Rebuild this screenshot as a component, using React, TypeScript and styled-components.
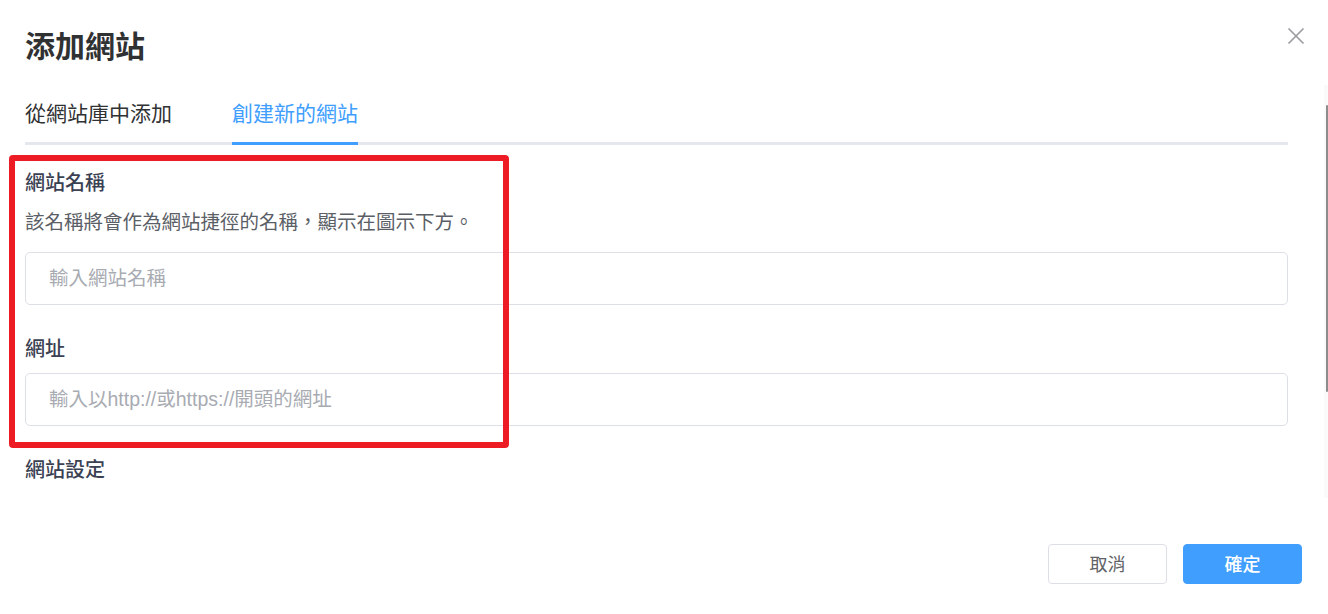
import React from "react";
import styled, { createGlobalStyle } from "styled-components";

const GlobalStyle = createGlobalStyle`
  html, body { margin: 0; padding: 0; background: #ffffff; }
  body { font-family: "Liberation Sans", "Noto Sans CJK TC", sans-serif; }
  * { box-sizing: border-box; }
`;

const Dialog = styled.div`
  width: 1328px;
  height: 614px;
  display: flex;
  flex-direction: column;
  background: #fff;
  overflow: hidden;
`;

const Header = styled.div`
  height: 85px;
  display: flex;
  justify-content: space-between;
  align-items: flex-start;
  padding: 22px 22px 0 25px;
`;

const Title = styled.h1`
  margin: 0;
  font-family: "Noto Sans CJK TC", sans-serif;
  font-size: 30px;
  line-height: 44px;
  font-weight: 700;
  color: #303133;
`;

const CloseButton = styled.button`
  border: none;
  background: transparent;
  padding: 0;
  margin-top: 4px;
  width: 20px;
  height: 20px;
  display: flex;
  align-items: center;
  justify-content: center;
  cursor: pointer;
`;

const BodyRow = styled.div`
  height: 413px;
  display: flex;
`;

const Body = styled.div`
  flex: 1;
  overflow: hidden;
  padding: 0 36px 0 25px;
`;

const ScrollRail = styled.div`
  width: 4px;
  background: #fafafa;
  display: flex;
  flex-direction: column;
  align-items: flex-end;
  padding-top: 20px;
`;

const ScrollThumb = styled.div`
  width: 2px;
  height: 287px;
  background: #8c8c8c;
  border-radius: 1px;
`;

const Tabs = styled.div`
  display: flex;
  gap: 60px;
  height: 60px;
  border-bottom: 3px solid #e4e7ed;
`;

const Tab = styled.div<{ $active?: boolean }>`
  display: flex;
  align-items: center;
  height: 60px;
  margin-bottom: -3px;
  padding-bottom: 3px;
  font-family: "Noto Sans CJK TC", sans-serif;
  font-size: 21px;
  font-weight: 400;
  color: ${(p) => (p.$active ? "#409eff" : "#303133")};
  border-bottom: 3px solid ${(p) => (p.$active ? "#409eff" : "transparent")};
  cursor: pointer;
`;

const Form = styled.div`
  position: relative;
  padding: 23px 0 0;
  display: flex;
  flex-direction: column;
  gap: 29px;
`;

const Field = styled.div`
  display: flex;
  flex-direction: column;
`;

const Label = styled.div`
  font-family: "Noto Sans CJK TC", sans-serif;
  font-size: 20px;
  line-height: 28px;
  font-weight: 500;
  color: #3a4152;
  margin-bottom: 11px;
`;

const Description = styled.div`
  font-family: "Noto Sans CJK TC", sans-serif;
  font-size: 19.5px;
  line-height: 28px;
  color: #5a5e66;
  margin-bottom: 17px;
`;

const Input = styled.input`
  width: 100%;
  height: 53px;
  border: 1px solid #dcdfe6;
  border-radius: 5px;
  padding: 0 23px;
  font-family: "Liberation Sans", "Noto Sans CJK TC", sans-serif;
  font-size: 19.5px;
  color: #303133;
  outline: none;
  &::placeholder { color: #a8abb2; }
`;

const Highlight = styled.div`
  position: absolute;
  top: 10px;
  left: -16px;
  width: 500px;
  height: 293px;
  border: 6px solid #ed1c24;
  border-radius: 4px;
  pointer-events: none;
`;

const Footer = styled.div`
  flex: 1;
  display: flex;
  justify-content: flex-end;
  align-items: flex-start;
  gap: 16px;
  padding: 46px 26px 0 0;
`;

const Button = styled.button<{ $primary?: boolean }>`
  width: 119px;
  height: 40px;
  border-radius: 4px;
  border: 1px solid ${(p) => (p.$primary ? "#409eff" : "#dcdfe6")};
  background: ${(p) => (p.$primary ? "#409eff" : "#ffffff")};
  color: ${(p) => (p.$primary ? "#ffffff" : "#606266")};
  font-family: "Noto Sans CJK TC", sans-serif;
  font-size: 18px;
  line-height: 24px;
  padding: 0 0 3px;
  font-weight: ${(p) => (p.$primary ? 500 : 400)};
  cursor: pointer;
`;

export default function App() {
  return (
    <>
      <GlobalStyle />
      <Dialog>
        <Header>
          <Title>添加網站</Title>
          <CloseButton aria-label="close">
            <svg width="18" height="18" viewBox="0 0 18 18">
              <path d="M1.5 1.5 L16.5 16.5 M16.5 1.5 L1.5 16.5" stroke="#9a9ba0" strokeWidth="1.6" fill="none" />
            </svg>
          </CloseButton>
        </Header>
        <BodyRow>
          <Body>
            <Tabs>
              <Tab>從網站庫中添加</Tab>
              <Tab $active>創建新的網站</Tab>
            </Tabs>
            <Form>
              <Field>
                <Label>網站名稱</Label>
                <Description>該名稱將會作為網站捷徑的名稱，顯示在圖示下方。</Description>
                <Input placeholder="輸入網站名稱" />
              </Field>
              <Field>
                <Label>網址</Label>
                <Input placeholder="輸入以http://或https://開頭的網址" />
              </Field>
              <Field>
                <Label>網站設定</Label>
              </Field>
              <Highlight />
            </Form>
          </Body>
          <ScrollRail>
            <ScrollThumb />
          </ScrollRail>
        </BodyRow>
        <Footer>
          <Button>取消</Button>
          <Button $primary>確定</Button>
        </Footer>
      </Dialog>
    </>
  );
}
